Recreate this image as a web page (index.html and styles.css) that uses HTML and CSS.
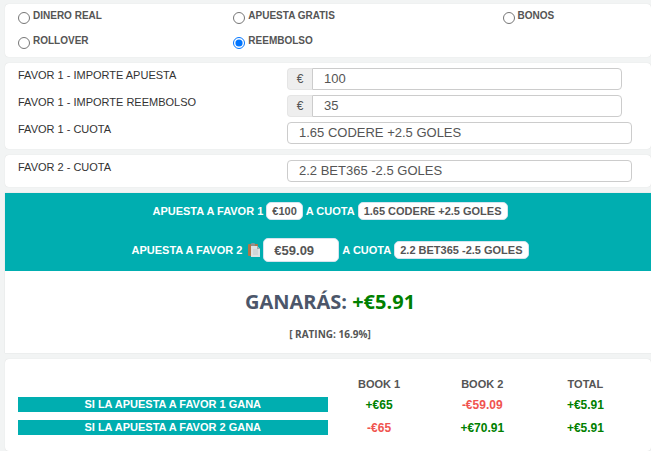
FILE: index.html
```html
<!DOCTYPE html>
<html lang="es">
<head>
  <meta charset="UTF-8" />
  <meta name="viewport" content="width=device-width, initial-scale=1.0" />
  <title>Calculadora</title>
  <link rel="stylesheet" href="styles.css">
</head>
<body>

  <div class="panel modes">
    <label class="mode"><input type="radio" name="mode" /><span>DINERO REAL</span></label>
    <label class="mode"><input type="radio" name="mode" /><span>APUESTA GRATIS</span></label>
    <label class="mode"><input type="radio" name="mode" /><span>BONOS</span></label>
    <label class="mode"><input type="radio" name="mode" /><span>ROLLOVER</span></label>
    <label class="mode"><input type="radio" name="mode" checked /><span>REEMBOLSO</span></label>
  </div>

  <div class="panel form">
    <div class="row">
      <label for="importe">FAVOR 1 - IMPORTE APUESTA</label>
      <div class="group">
        <span class="addon">€</span>
        <input class="field" type="text" id="importe" value="100" />
      </div>
    </div>
    <div class="row">
      <label for="reembolso">FAVOR 1 - IMPORTE REEMBOLSO</label>
      <div class="group">
        <span class="addon">€</span>
        <input class="field" type="text" id="reembolso" value="35" />
      </div>
    </div>
    <div class="row">
      <label for="cuota1">FAVOR 1 - CUOTA</label>
      <input class="field" type="text" id="cuota1" value="1.65 CODERE +2.5 GOLES" />
    </div>
  </div>

  <div class="panel form">
    <div class="row">
      <label for="cuota2">FAVOR 2 - CUOTA</label>
      <input class="field" type="text" id="cuota2" value="2.2 BET365 -2.5 GOLES" />
    </div>
  </div>

  <div class="result">
    <div class="bets">
      <div class="bet">
        <span>APUESTA A FAVOR 1</span>
        <span class="chip">€100</span>
        <span>A CUOTA</span>
        <span class="chip">1.65 CODERE +2.5 GOLES</span>
      </div>
      <div class="bet">
        <label for="apuesta2">APUESTA A FAVOR 2</label>
        <button class="copy" type="button" aria-label="Copiar">
          <svg width="12" height="14" viewBox="0 0 12 14">
            <rect x="0" y="1" width="10" height="12" rx="1" fill="#b0764a" />
            <rect x="3" y="0" width="4" height="3" rx="1" fill="#8b9295" />
            <path d="M3 3h6l3 3v8H3z" fill="#dfe2e4" />
            <path d="M9 3v3h3z" fill="#a3aaae" />
            <path d="M5 7h5M5 9h5M5 11h5" stroke="#c3c8cb" />
          </svg>
        </button>
        <input class="chip stake" type="text" id="apuesta2" value="€59.09" />
        <span>A CUOTA</span>
        <span class="chip">2.2 BET365 -2.5 GOLES</span>
      </div>
    </div>
    <h2>GANARÁS: <span class="win">+€5.91</span></h2>
    <p class="rating">[ RATING: 16.9%]</p>
  </div>

  <div class="panel summary">
    <table>
      <thead>
        <tr><td></td><th>BOOK 1</th><th>BOOK 2</th><th>TOTAL</th></tr>
      </thead>
      <tbody>
        <tr>
          <th><div class="bar">SI LA APUESTA A FAVOR 1 GANA</div></th>
          <td class="win">+€65</td>
          <td class="loss">-€59.09</td>
          <td class="win">+€5.91</td>
        </tr>
        <tr>
          <th><div class="bar">SI LA APUESTA A FAVOR 2 GANA</div></th>
          <td class="loss">-€65</td>
          <td class="win">+€70.91</td>
          <td class="win">+€5.91</td>
        </tr>
      </tbody>
    </table>
  </div>

</body>
</html>
```
FILE: styles.css
```css
* {
  box-sizing: border-box;
}

body {
  margin: 0;
  padding: 4px 0 0 5px;
  background: #f2f4f4;
  color: #555;
  font-family: "Liberation Sans", Arial, sans-serif;
  font-size: 11px;
  display: flex;
  flex-direction: column;
  gap: 6px;
}

.panel {
  background: #fff;
  border-radius: 4px;
  box-shadow: 0 0 1px rgba(0,0,0,0.15);
}

.modes {
  display: grid;
  grid-template-columns: 4fr 5fr 3fr;
  row-gap: 9px;
  padding: 4px 0 8px;
}

.mode {
  display: flex;
  align-items: flex-start;
  gap: 3px;
  padding-left: 13px;
  font-size: 10px;
  font-weight: bold;
  line-height: 16px;
}

.mode input {
  width: 12px;
  height: 12px;
  margin: 4px 0 0;
}

.form {
  display: flex;
  flex-direction: column;
  gap: 5px;
  padding: 5px 0;
}

.row {
  display: grid;
  grid-template-columns: 282fr 345fr;
  padding-right: 19px;
}

.row label {
  padding-left: 13px;
  color: #333;
  line-height: 15px;
}

.group {
  display: flex;
  margin-right: 10px;
}

.addon {
  width: 25px;
  background: #eee;
  border: 1px solid #e5e5e5;
  border-right: 0;
  border-radius: 4px 0 0 4px;
  font-size: 12px;
  text-align: center;
  line-height: 20px;
}

.field {
  width: 100%;
  min-width: 0;
  height: 22px;
  padding: 0 11px 2px;
  border: 1px solid #ccc;
  border-radius: 4px;
  background: #fff;
  color: #555;
  font-family: inherit;
  font-size: 13px;
}

.group .field {
  flex: 1;
  border-radius: 0 4px 4px 0;
}

.result {
  background: #fff;
  box-shadow: 0 0 1px rgba(0,0,0,0.15);
  text-align: center;
}

.bets {
  display: flex;
  flex-direction: column;
  gap: 18px;
  padding: 9px 0 9px 4px;
  background: #00aeb0;
  color: #fff;
  font-weight: bold;
}

.bet {
  display: flex;
  justify-content: center;
  align-items: center;
  gap: 3px;
}

.chip {
  padding: 0 5px;
  border: 1px solid #d5e3ee;
  border-radius: 5px;
  background: #fff;
  color: #555;
  line-height: 16px;
}

.stake {
  width: 76px;
  height: 24px;
  padding: 0 10px;
  font-family: inherit;
  font-size: 13px;
  font-weight: bold;
}

.copy {
  display: flex;
  margin-left: 3px;
  padding: 0;
  border: 0;
  background: none;
  cursor: pointer;
}

h2 {
  margin: 17px 0 0;
  padding-left: 4px;
  color: #4c566a;
  font-family: "Open Sans", sans-serif;
  font-size: 20px;
  line-height: 28px;
}

.rating {
  margin: 11px 0 12px;
  padding-left: 4px;
  font-family: "Open Sans", sans-serif;
  font-size: 10px;
  font-weight: bold;
  line-height: 14px;
}

.win {
  color: #008000;
}

.loss {
  color: #f0544f;
}

.summary {
  padding: 15px 14px 12px 13px;
}

table {
  width: 100%;
  table-layout: fixed;
  border-collapse: collapse;
  text-align: center;
}

th, td {
  height: 23px;
  padding: 0;
}

thead td {
  width: 50%;
  height: 19px;
}

thead th {
  height: 19px;
}

tbody td {
  font-size: 12px;
  font-weight: bold;
}

.bar {
  background: #00aeb0;
  color: #fff;
  line-height: 15px;
}
```
